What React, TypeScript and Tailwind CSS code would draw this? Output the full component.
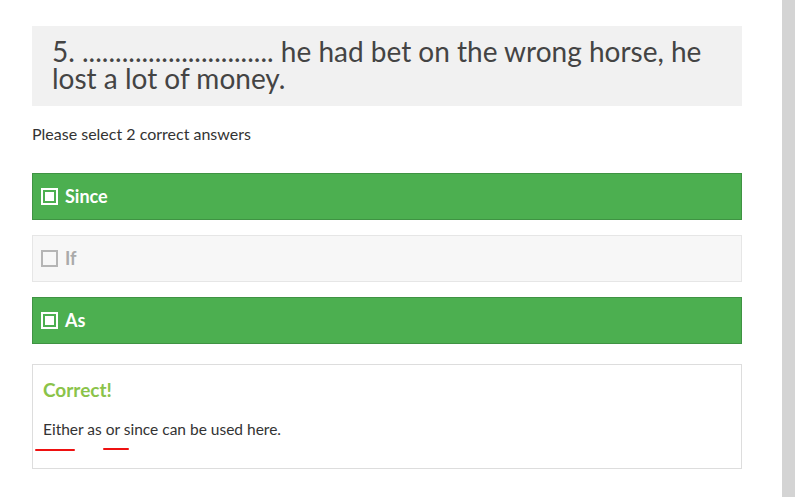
const options = [
  { label: "Since", checked: true },
  { label: "If", checked: false },
  { label: "As", checked: true },
];

const CheckIcon = ({ checked }: { checked: boolean }) =>
  checked ? (
    <span className="flex h-[17px] w-[17px] items-center justify-center border-2 border-white">
      <span className="h-[9px] w-[9px] bg-white" />
    </span>
  ) : (
    <span className="h-[17px] w-[17px] border-2 border-[#b5b5b5]" />
  );

const App = () => {
  return (
    <div className="flex min-h-[497px] bg-white font-['Lato',sans-serif]">
      <div className="flex-1 pl-[32px] pr-[40px] pt-[26px]">
        <div className="w-[710px]">
          <div className="bg-[#f1f1f1] px-[20px] pt-[12px] pb-[14px] text-[28px] leading-[27px] text-[#444]">
            5. ............................. he had bet on the wrong horse, he lost a lot of money.
          </div>
          <p className="mt-[19px] text-[16px] leading-[18px] text-[#333]">
            Please select 2 correct answers
          </p>
          <div className="mt-[30px] flex flex-col gap-[15px]">
            {options.map((o) => (
              <div
                key={o.label}
                className={
                  o.checked
                    ? "flex h-[47px] items-center gap-[7px] border border-[#3f9343] bg-[#4caf50] pl-[8px] text-[18px] font-bold text-white"
                    : "flex h-[47px] items-center gap-[7px] border border-[#e6e6e6] bg-[#f7f7f7] pl-[8px] text-[18px] font-bold text-[#aaa]"
                }
              >
                <CheckIcon checked={o.checked} />
                <span>{o.label}</span>
              </div>
            ))}
          </div>
          <div className="relative mt-[20px] h-[105px] border border-[#ddd] bg-white px-[10px] pt-[13px]">
            <div className="text-[19px] font-bold leading-[24px] text-[#8bc34a]">Correct!</div>
            <p className="mt-[17px] text-[15.5px] leading-[20px] text-[#333]">
              Either as or since can be used here.
            </p>
            <span className="absolute left-[2px] top-[84px] h-[2px] w-[40px] rounded-full bg-[#e11]" />
            <span className="absolute left-[70px] top-[83px] h-[2px] w-[26px] rounded-full bg-[#e11]" />
          </div>
        </div>
      </div>
      <div className="w-[13px] bg-[#d4d4d4]" />
    </div>
  );
};

export default App;
